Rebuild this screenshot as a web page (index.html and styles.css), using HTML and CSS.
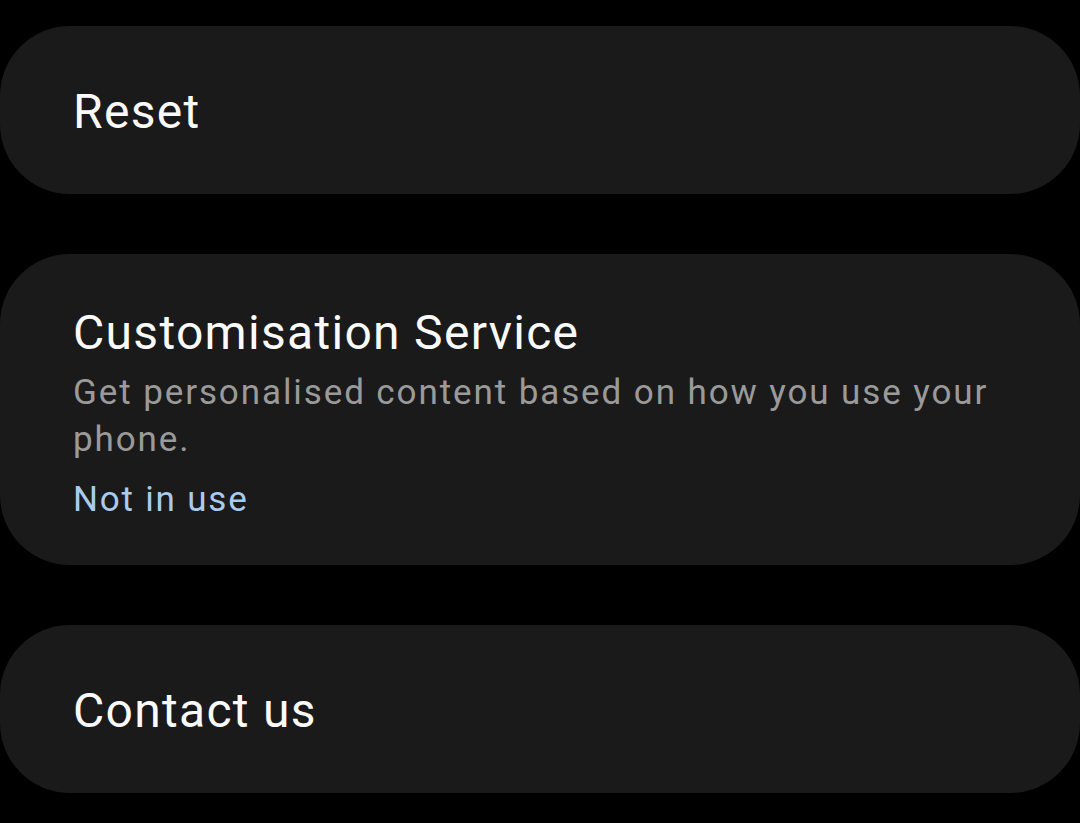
FILE: index.html
```html
<!doctype html>
<html lang="en">
  <head>
    <meta charset="UTF-8" />
    <meta name="viewport" content="width=device-width, initial-scale=1.0" />
    <title>Settings</title>
    <link rel="stylesheet" href="styles.css">
  </head>
  <body>
    <div class="settings-list">
      <div class="card card-single">
        <h2 class="card-title">Reset</h2>
      </div>
      <div class="card card-detail">
        <h2 class="card-title">Customisation Service</h2>
        <p class="card-summary">Get personalised content based on how you use your phone.</p>
        <p class="card-status">Not in use</p>
      </div>
      <div class="card card-single">
        <h2 class="card-title">Contact us</h2>
      </div>
    </div>
  </body>
</html>
```

FILE: styles.css
```css
body {
  margin: 0;
  background-color: #000;
  font-family: Roboto, "Liberation Sans", sans-serif;
}

.settings-list {
  display: flex;
  flex-direction: column;
  gap: 60px;
  padding-top: 26px;
}

.card {
  background-color: #1a1a1a;
  border-radius: 70px;
  padding: 0 73px;
}
.card-single {
  padding-top: 58px;
  padding-bottom: 54px;
}
.card-detail {
  padding-top: 51px;
  padding-bottom: 42px;
}

.card-title {
  margin: 0;
  color: #fafafa;
  font-size: 48px;
  font-weight: 400;
  line-height: 56px;
  letter-spacing: 1.3px;
}
.card-summary {
  margin: 8px 0 0;
  color: #9a9a9a;
  font-size: 35px;
  line-height: 47px;
  letter-spacing: 1.9px;
}
.card-status {
  margin: 13px 0 0;
  color: #a9cbef;
  font-size: 35px;
  line-height: 47px;
  letter-spacing: 1.8px;
}
```
